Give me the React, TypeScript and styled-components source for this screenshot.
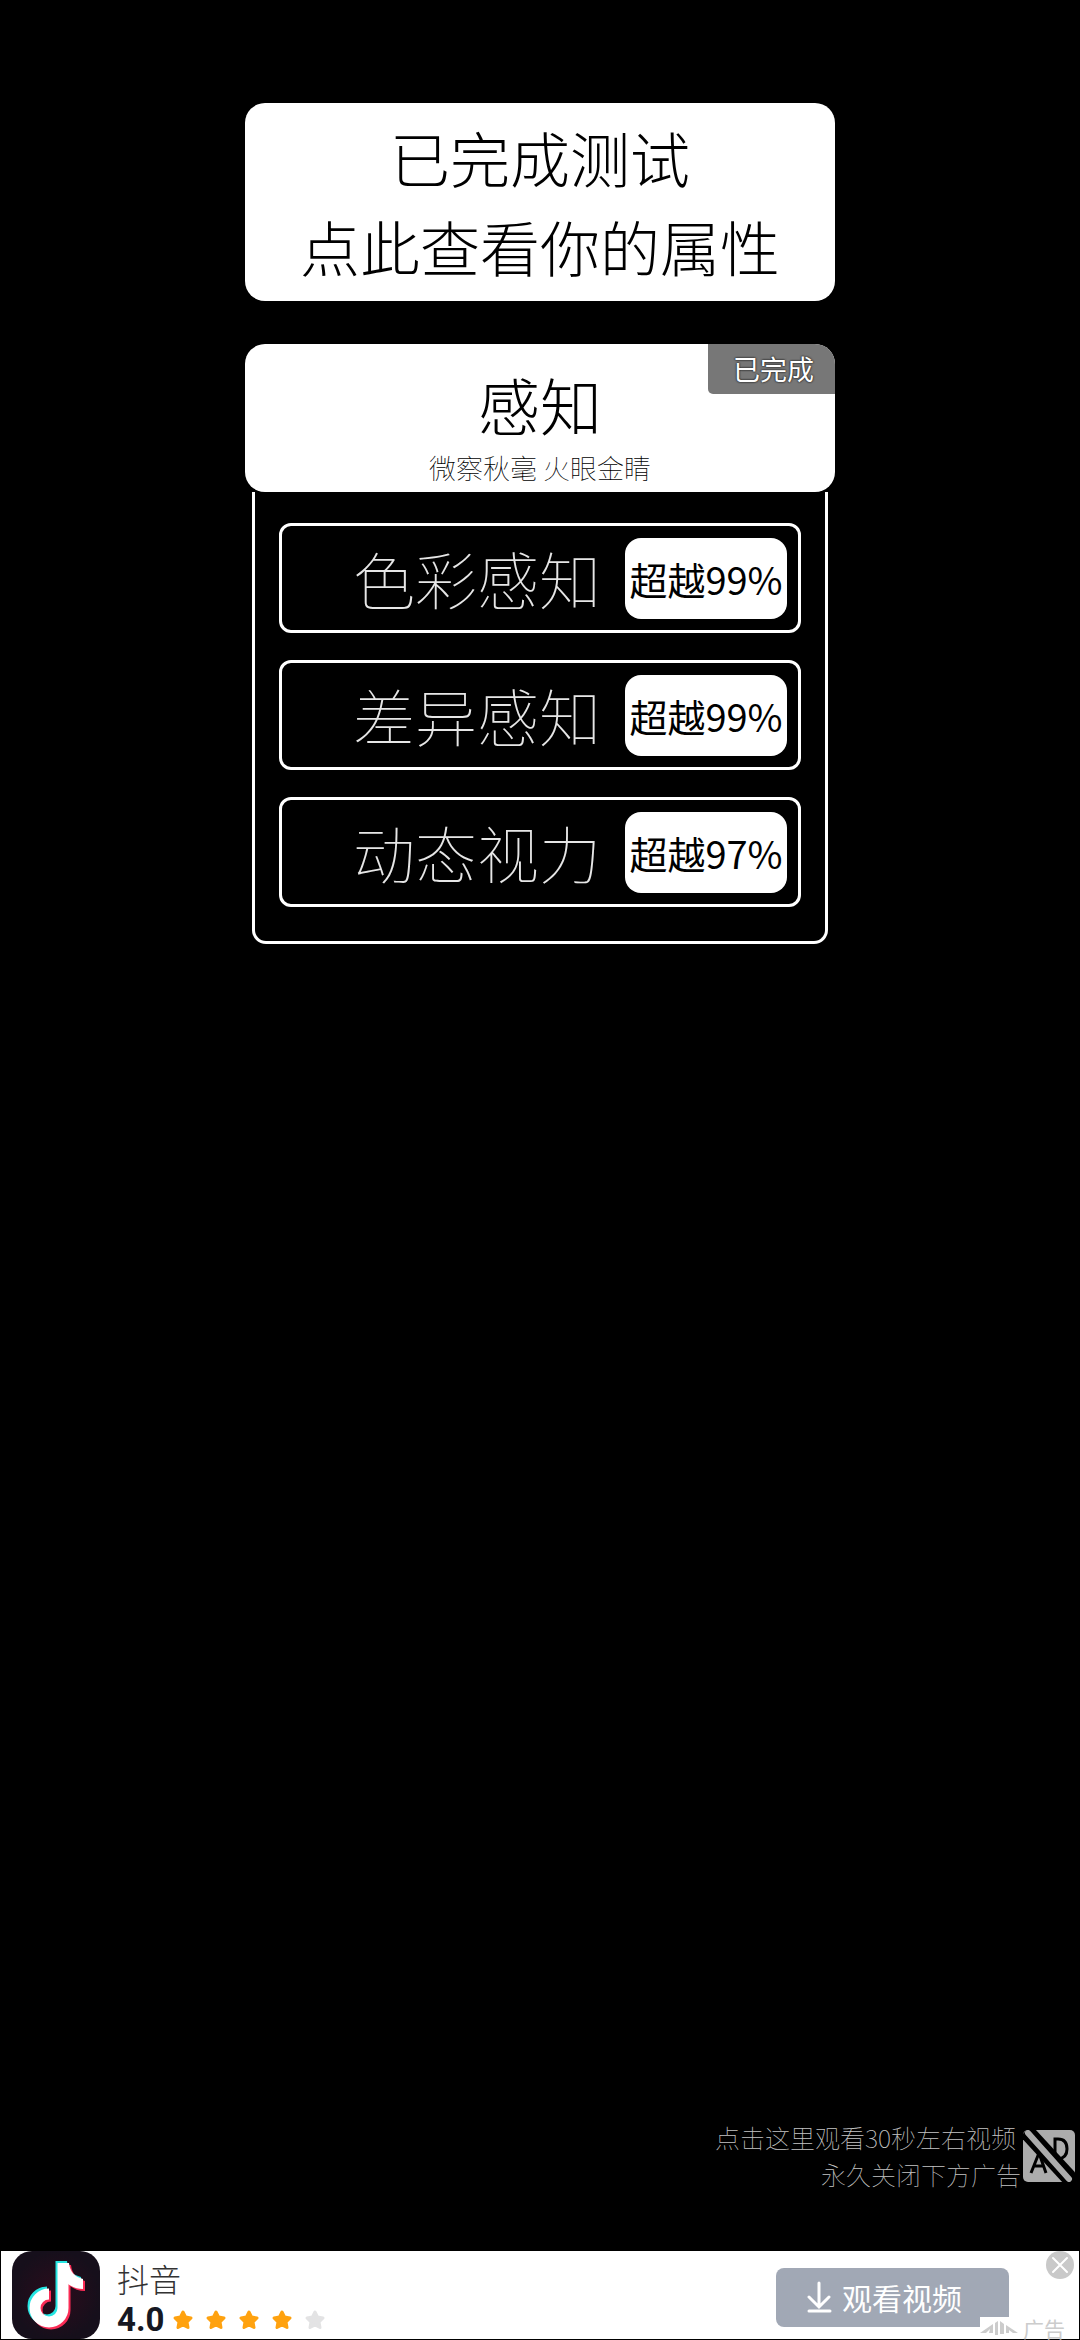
import React from 'react';
import styled, { createGlobalStyle } from 'styled-components';

const Global = createGlobalStyle`
  * { box-sizing: border-box; }
  html, body, #root { margin: 0; min-height: 100vh; background: #000; }
  body { font-family: "Noto Sans CJK SC", sans-serif; }
  button { font: inherit; border: 0; padding: 0; margin: 0; cursor: pointer; }
`;

const Page = styled.div`
  min-height: 100vh;
  display: flex;
  flex-direction: column;
  color: #fff;
`;

const Main = styled.main`
  width: 590px;
  max-width: 100%;
  margin: 103px auto 0;
  display: flex;
  flex-direction: column;
  align-items: center;
`;

const ResultButton = styled.button`
  && {
    width: 100%;
    padding: 9px 0 11px;
    border-radius: 20px;
    background: #fff;
    color: #000;
    font-size: 60px;
    font-weight: 300;
    line-height: 89px;
  }
`;

const Category = styled.button`
  && {
    position: relative;
    width: 100%;
    height: 148px;
    margin-top: 43px;
    border-radius: 20px;
    overflow: hidden;
    background: #fff;
    color: #000;
    display: flex;
    flex-direction: column;
    align-items: center;
    padding-top: 16px;
  }
`;

const CategoryName = styled.span`
  font-size: 62px;
  font-weight: 300;
  line-height: 88px;
`;

const CategoryNote = styled.span`
  font-size: 27px;
  font-weight: 100;
  line-height: 40px;
`;

const DoneTag = styled.span`
  position: absolute;
  top: 0;
  right: 0;
  padding: 0 21px 0 25px;
  border-bottom-left-radius: 5px;
  background: #777;
  color: #fff;
  font-size: 27px;
  font-weight: 400;
  line-height: 50px;
  text-shadow: 0 0 2px #222, 0 0 2px #222;
`;

const Panel = styled.section`
  width: 576px;
  max-width: 100%;
  padding: 31px 24px 34px;
  border: 3px solid #fff;
  border-top: 0;
  border-radius: 0 0 14px 14px;
  display: flex;
  flex-direction: column;
  gap: 27px;
`;

const TestRow = styled.button`
  && {
    height: 110px;
    padding: 0 11px;
    border: 3px solid #fff;
    border-radius: 12px;
    background: transparent;
    color: #fff;
    display: flex;
    align-items: center;
    justify-content: flex-end;
    gap: 24px;
  }
`;

const TestName = styled.span`
  color: #e6e6e6;
  font-size: 62px;
  font-weight: 100;
  line-height: 88px;
`;

const Score = styled.span`
  width: 162px;
  border-radius: 16px;
  background: #fff;
  color: #000;
  font-size: 38px;
  font-weight: 400;
  line-height: 81px;
  text-align: center;
  white-space: nowrap;
`;

const RemoveAd = styled.button`
  && {
    align-self: flex-end;
    margin-top: auto;
    margin-bottom: 57px;
    padding-right: 5px;
    background: transparent;
    color: #c4c4c4;
    display: flex;
    align-items: center;
    gap: 2px;
  }
`;

const RemoveAdText = styled.span`
  display: flex;
  flex-direction: column;
  align-items: flex-end;
  font-size: 25px;
  font-weight: 100;
  line-height: 37px;
`;

const HintLine = styled.span<{ $inset?: boolean }>`
  padding-right: ${(p) => (p.$inset ? 5 : 0)}px;
`;

const Banner = styled.aside`
  position: relative;
  height: 90px;
  padding: 0 70px 0 11px;
  border: 1px solid #000;
  background: #fff;
  display: flex;
  align-items: center;
`;

const AppInfo = styled.div`
  flex: 1;
  margin-left: 17px;
  padding-top: 4px;
  display: flex;
  flex-direction: column;
`;

const AppName = styled.span`
  color: #333;
  font-size: 32px;
  font-weight: 300;
  line-height: 46px;
`;

const Rating = styled.div`
  display: flex;
  align-items: center;
  gap: 8px;
  color: #161823;
  font-family: Roboto, sans-serif;
  font-size: 33px;
  font-weight: 700;
  line-height: 38px;
`;

const Stars = styled.span`
  display: flex;
  gap: 11px;
`;

const WatchButton = styled.button`
  && {
    width: 233px;
    height: 59px;
    margin-top: 4px;
    padding-left: 30px;
    border-radius: 8px;
    background: #a1a8b5;
    color: #fff;
    display: flex;
    align-items: center;
    gap: 8px;
    font-size: 30px;
    font-weight: 400;
    line-height: 44px;
  }
`;

const CloseButton = styled.button`
  && {
    position: absolute;
    top: 0;
    right: 5px;
    width: 28px;
    height: 28px;
    background: transparent;
    display: flex;
  }
`;

const AdMark = styled.span`
  position: absolute;
  right: 0;
  bottom: 0;
  height: 22px;
  padding-right: 14px;
  background: #fff;
  color: #ccc;
  display: flex;
  align-items: center;
  gap: 5px;
  font-size: 21px;
  font-weight: 400;
  line-height: 18px;
`;

const NoAdIcon = () => (
  <svg width="52" height="52" viewBox="0 0 52 52" fill="none" aria-hidden="true">
    <rect width="52" height="52" rx="5" fill="#acacac" />
    <path d="M8 43 L16 23 L23 43 M11 36 H20" stroke="#000" strokeWidth="3" />
    <path d="M32 9 V29 H35 Q44 28 44 19 Q44 9 35 9 Z" stroke="#000" strokeWidth="3" />
    <path d="M3 1 L50 52" stroke="#000" strokeWidth="16" />
    <path d="M5 3 L46 49" stroke="#acacac" strokeWidth="6" strokeLinecap="round" />
  </svg>
);

const Note = ({ color, x, y }: { color: string; x: number; y: number }) => (
  <g transform={`translate(${x} ${y})`}>
    <path d="M37 42 A14 14 0 1 0 51 56 V11" fill="none" stroke={color} strokeWidth="11" />
    <path d="M51 11 H57 C58 20 63 25 71 27 V37 C65 37 60 35 56 32 Z" fill={color} />
  </g>
);

const DouyinLogo = () => (
  <svg width="88" height="88" viewBox="0 0 88 88" aria-hidden="true">
    <defs>
      <radialGradient id="logoBg">
        <stop offset="0" stopColor="#2c0c1c" />
        <stop offset="1" stopColor="#160f1b" />
      </radialGradient>
    </defs>
    <rect width="88" height="88" rx="20" fill="url(#logoBg)" />
    <Note color="#25e5e2" x={-2} y={-1} />
    <Note color="#fb2c55" x={2} y={3} />
    <Note color="#fff" x={0} y={1} />
  </svg>
);

const Star = ({ filled }: { filled: boolean }) => (
  <svg width="22" height="22" viewBox="0 0 22 22" aria-hidden="true">
    <path
      d="M11 3 L13.500 8 L19 9 L15 13 L16 18.500 L11 16 L6 18.500 L7 13 L3 9 L8.500 8 Z"
      fill={filled ? '#ffa20f' : '#e3e3e4'}
      stroke={filled ? '#ffa20f' : '#e3e3e4'}
      strokeWidth="3"
      strokeLinejoin="round"
    />
  </svg>
);

const tests = [
  { name: '色彩感知', score: '超越99%' },
  { name: '差异感知', score: '超越99%' },
  { name: '动态视力', score: '超越97%' },
];

export default function App() {
  return (
    <Page>
      <Global />
      <Main>
        <ResultButton>
          已完成测试
          <br />
          点此查看你的属性
        </ResultButton>
        <Category>
          <CategoryName>感知</CategoryName>
          <CategoryNote>微察秋毫 火眼金睛</CategoryNote>
          <DoneTag>已完成</DoneTag>
        </Category>
        <Panel>
          {tests.map((t) => (
            <TestRow key={t.name}>
              <TestName>{t.name}</TestName>
              <Score>{t.score}</Score>
            </TestRow>
          ))}
        </Panel>
      </Main>
      <RemoveAd>
        <RemoveAdText>
          <HintLine $inset>点击这里观看30秒左右视频</HintLine>
          <HintLine>永久关闭下方广告</HintLine>
        </RemoveAdText>
        <NoAdIcon />
      </RemoveAd>
      <Banner>
        <DouyinLogo />
        <AppInfo>
          <AppName>抖音</AppName>
          <Rating>
            4.0
            <Stars>
              {[1, 2, 3, 4, 5].map((n) => (
                <Star key={n} filled={n <= 4} />
              ))}
            </Stars>
          </Rating>
        </AppInfo>
        <WatchButton>
          <svg width="28" height="32" viewBox="0 0 28 32" fill="none" stroke="#fff" strokeWidth="3" strokeLinecap="round" aria-hidden="true">
            <path d="M13 2 V25 M3 16 L13 26 L23 16 M3 30 H24" />
          </svg>
          观看视频
        </WatchButton>
        <CloseButton aria-label="关闭">
          <svg width="28" height="28" viewBox="0 0 28 28" aria-hidden="true">
            <circle cx="14" cy="14" r="14" fill="#c9c9c9" />
            <path d="M7 7 L21 21 M21 7 L7 21" stroke="#fff" strokeWidth="2" strokeLinecap="round" />
          </svg>
        </CloseButton>
        <AdMark>
          <svg width="38" height="16" viewBox="0 0 38 16" fill="#ccc" aria-hidden="true">
            <path d="M0 13 L13 4 V13 H9 L10 9 L6 13 Z M15 3 L18 1 V15 H15 Z M20 1 L24 4 V14 H20 Z M26 5 L38 13 H33 L29 10 V13 H26 Z" />
          </svg>
          广告
        </AdMark>
      </Banner>
    </Page>
  );
}
